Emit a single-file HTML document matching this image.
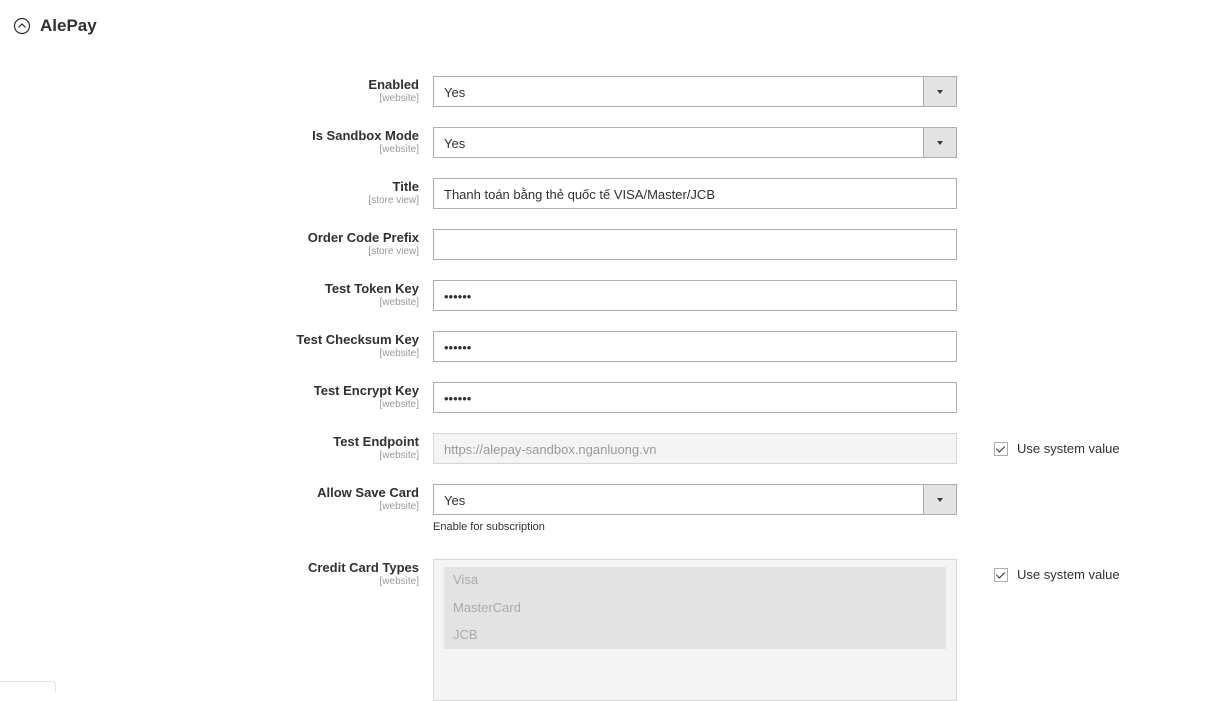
<!DOCTYPE html>
<html><head><meta charset="utf-8"><style>
body{margin:0;width:1215px;height:686px;overflow:hidden;background:#fff;font-family:"Liberation Sans","DejaVu Sans",sans-serif;color:#303030;position:relative}
.h{position:absolute;left:13px;top:16px;font-size:17px;font-weight:bold;color:#303030;display:flex;align-items:center}
.h svg{margin-right:9px}
.lab{position:absolute;right:796px;text-align:right;font-size:13px;font-weight:bold;line-height:14px;color:#303030}
.lab small{display:block;font-size:10px;font-weight:normal;color:#999;line-height:13px}
.in{position:absolute;left:433px;height:29px;border:1px solid #adadad;background:#fff;font-size:13px;line-height:31px;padding-left:10px;box-sizing:content-box;width:512px}
.sel .btn{position:absolute;right:0;top:0;width:32px;height:29px;background:#e3e3e3;border-left:1px solid #adadad}
.sel .btn:after{content:"";position:absolute;left:13px;top:13px;border-left:3px solid transparent;border-right:3px solid transparent;border-top:4px solid #41362f}
.dis{background:#f4f4f4;border-color:#d6d6d6;color:#999}
.chk{position:absolute;left:994px;font-size:13px;color:#303030;display:flex;align-items:center}
.chk span{width:12px;height:12px;border:1px solid #adadad;margin-right:9px;position:relative;background:#fff}
.chk span:after{content:"";position:absolute;left:3px;top:1px;width:4px;height:7px;border:solid #303030;border-width:0 1.5px 1.5px 0;transform:rotate(45deg)}
</style></head><body>
<div class="h"><svg width="18" height="18" viewBox="0 0 18 18"><circle cx="9" cy="9" r="7.5" fill="none" stroke="#303030" stroke-width="1.2"/><path d="M5.5 10.5 L9 7 L12.5 10.5" fill="none" stroke="#303030" stroke-width="1.2"/></svg>AlePay</div>

<div class="lab" style="top:78px">Enabled<small>[website]</small></div>
<div class="in sel" style="top:76px">Yes<div class="btn"></div></div>

<div class="lab" style="top:129px">Is Sandbox Mode<small>[website]</small></div>
<div class="in sel" style="top:127px">Yes<div class="btn"></div></div>

<div class="lab" style="top:180px">Title<small>[store view]</small></div>
<div class="in" style="top:178px">Thanh toán bằng thẻ quốc tế VISA/Master/JCB</div>

<div class="lab" style="top:231px">Order Code Prefix<small>[store view]</small></div>
<div class="in" style="top:229px"></div>

<div class="lab" style="top:282px">Test Token Key<small>[website]</small></div>
<div class="in" style="top:280px">••••••</div>

<div class="lab" style="top:333px">Test Checksum Key<small>[website]</small></div>
<div class="in" style="top:331px">••••••</div>

<div class="lab" style="top:384px">Test Encrypt Key<small>[website]</small></div>
<div class="in" style="top:382px">••••••</div>

<div class="lab" style="top:435px">Test Endpoint<small>[website]</small></div>
<div class="in dis" style="top:433px">https://alepay-sandbox.nganluong.vn</div>
<div class="chk" style="top:441px"><span></span>Use system value</div>

<div class="lab" style="top:486px">Allow Save Card<small>[website]</small></div>
<div class="in sel" style="top:484px">Yes<div class="btn"></div></div>
<div style="position:absolute;left:433px;top:521px;font-size:11px;color:#303030">Enable for subscription</div>

<div class="lab" style="top:561px">Credit Card Types<small>[website]</small></div>
<div style="position:absolute;left:433px;top:559px;width:522px;height:140px;border:1px solid #d6d6d6;background:#f4f4f4">
<div style="position:absolute;left:10px;top:7px;width:502px;height:82px;background:#e3e3e3;color:#aaa;font-size:13px">
<div style="position:absolute;left:9px;top:5px">Visa</div>
<div style="position:absolute;left:9px;top:33px">MasterCard</div>
<div style="position:absolute;left:9px;top:60px">JCB</div>
</div></div>
<div class="chk" style="top:567px"><span></span>Use system value</div>
<div style="position:absolute;left:0;top:681px;width:55px;height:10px;border-top:1px solid #e3e3e3;border-right:1px solid #e3e3e3;border-radius:0 4px 0 0"></div>
</body></html>
